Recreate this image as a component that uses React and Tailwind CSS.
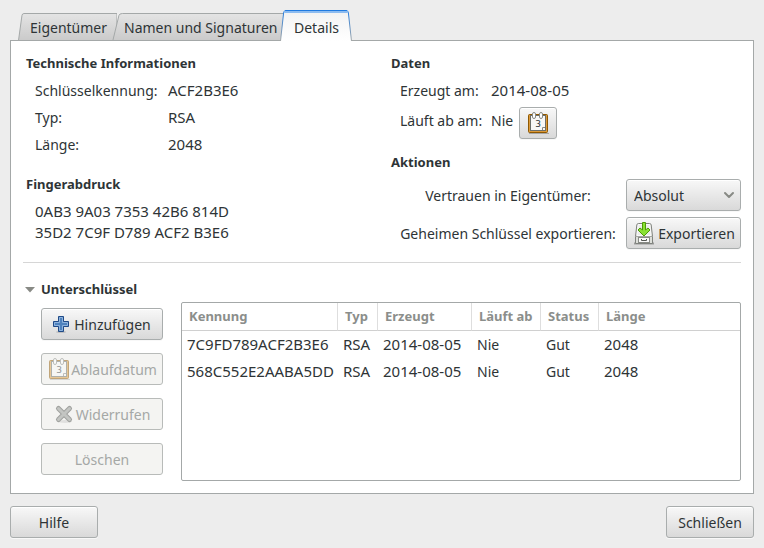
import { useState } from "react";
import { ChevronDown } from "lucide-react";

const BUTTON =
  "flex items-center justify-center rounded-[3px] border border-[#a9adad] bg-linear-to-b from-[#f8f8f8] to-[#d9d9d9] shadow-[0_1px_0_#f8f8f8,inset_0_1px_0_#ffffff] disabled:border-[#b8bbb9] disabled:bg-none disabled:bg-[#f4f4f2] disabled:text-[#a5a8a6] disabled:shadow-none";

const SUBKEYS = [
  ["7C9FD789ACF2B3E6", "RSA", "2014-08-05", "Nie", "Gut", "2048"],
  ["568C552E2AABA5DD", "RSA", "2014-08-05", "Nie", "Gut", "2048"],
];

const COLUMNS = [
  { title: "Kennung", width: "w-[156px]", size: "text-[15px]" },
  { title: "Typ", width: "w-[40px]", size: "text-[15px]" },
  { title: "Erzeugt", width: "w-[94px]", size: "text-[15px]" },
  { title: "Läuft ab", width: "w-[69px]", size: "" },
  { title: "Status", width: "w-[58px]", size: "" },
  { title: "Länge", width: "", size: "text-[15px]" },
];

function CalendarIcon({ className = "" }) {
  return (
    <svg className={`size-6 shrink-0 ${className}`} viewBox="0 0 24 24" aria-hidden="true">
      <path d="M3 22.5h20" stroke="#000" strokeOpacity=".25" />
      <rect x="2.5" y="3.5" width="19" height="18" rx="1" fill="#c17d11" stroke="#8f5902" />
      <rect x="3.5" y="4.5" width="17" height="16" fill="none" stroke="#dc9a3a" />
      <rect x="4.5" y="4.5" width="15" height="15" fill="#f8f8f7" stroke="#6b6e69" />
      <path d="M16.5 19v-2.500H19" fill="none" stroke="#888a85" />
      <rect x="6.5" y="1.5" width="3" height="6" rx="1.5" fill="#fff" stroke="#888a85" />
      <rect x="13.5" y="1.5" width="3" height="6" rx="1.5" fill="#fff" stroke="#888a85" />
      <text x="12" y="16" textAnchor="middle" fontSize="9" fontFamily="DejaVu Sans, sans-serif" fill="#2e3436">
        3
      </text>
    </svg>
  );
}

function ExportIcon() {
  return (
    <svg className="size-6 shrink-0" viewBox="0 0 24 24" aria-hidden="true">
      <path d="M2 22.5h20" stroke="#000" strokeOpacity=".3" strokeWidth="2" />
      <path
        d="M6.500 2.500h11q1.500 0 1.700 1.500l1.300 11.500v7h-17v-7L4.800 4q.2-1.500 1.700-1.500z"
        fill="#dddfda"
        stroke="#7f827d"
        strokeLinejoin="round"
      />
      <path d="M6.200 3.500h11.600l1.200 11H5z" fill="#ebecea" stroke="#fafafa" />
      <path d="M4 15.500h16" stroke="#a3a5a1" />
      <rect x="6.500" y="16.500" width="11" height="5" fill="#fafafa" stroke="#888a85" />
      <path d="M9.500 18v1.500h5V18" fill="none" stroke="#555753" />
      <path
        d="M10.500 1.500h3V9L16 7l2 2-6 6-6-6 2-2 2.500 2z"
        fill="#8ae234"
        stroke="#4e9a06"
        strokeLinejoin="round"
      />
    </svg>
  );
}

function PlusIcon() {
  return (
    <svg className="size-4 shrink-0 overflow-visible" viewBox="0 0 16 16" aria-hidden="true">
      <ellipse cx="8" cy="16" rx="5" ry="1" fill="#000" fillOpacity=".15" />
      <path
        d="M5.500 .5h5v5h5v5h-5v5h-5v-5h-5v-5h5z"
        fill="#4f82bd"
        stroke="#204a87"
        strokeLinejoin="round"
      />
      <path d="M6.500 1.500h3v5h5v3h-5v5h-3v-5h-5v-3h5z" fill="none" stroke="#8fb4de" />
    </svg>
  );
}

function CrossIcon() {
  return (
    <svg className="size-5 shrink-0" viewBox="0 0 20 20" aria-hidden="true">
      <ellipse cx="11" cy="17.500" rx="7" ry="1.500" fill="#000" fillOpacity=".08" />
      <path d="M4.500 4.500l11 11M15.500 4.500l-11 11" stroke="#a0a29f" strokeWidth="5" strokeLinecap="round" />
      <path d="M4.500 4.500l11 11M15.500 4.500l-11 11" stroke="#c3c5c2" strokeWidth="3" strokeLinecap="round" />
    </svg>
  );
}

function Tab({ label, active, last, width, onClick }) {
  return (
    <button
      type="button"
      role="tab"
      aria-selected={active}
      onClick={onClick}
      className={`relative flex h-[31px] shrink-0 items-center pt-1 whitespace-nowrap ${width} ${active ? "z-10 pl-[14px]" : "pl-3"}`}
    >
      <svg
        className={`absolute top-0 left-0 h-full ${last ? "w-full" : "w-[calc(100%+5px)]"}`}
        viewBox="0 0 100 31"
        preserveAspectRatio="none"
        aria-hidden="true"
      >
        <defs>
          <linearGradient id="tab-idle" x1="0" y1="0" x2="0" y2="1">
            <stop offset="0" stopColor="#e4e4e4" />
            <stop offset="1" stopColor="#cacaca" />
          </linearGradient>
          <linearGradient id="tab-active" x1="0" y1="0" x2="0" y2="1">
            <stop offset="0" stopColor="#f2f2f2" />
            <stop offset="1" stopColor="#ffffff" />
          </linearGradient>
          <linearGradient id="tab-edge" x1="0" y1="0" x2="0" y2="1">
            <stop offset="0" stopColor="#1f7ae0" />
            <stop offset="1" stopColor="#a4a8a8" />
          </linearGradient>
        </defs>
        {active ? (
          <>
            <path d="M.7 31L5 3Q5.300 .5 8 .5H92Q94.700 .5 95 3L99.300 31" fill="url(#tab-active)" stroke="url(#tab-edge)" vectorEffect="non-scaling-stroke" />
            <path d="M6 2H94" stroke="#8dbcf0" strokeWidth="2" />
            <path d="M7 .5H93" stroke="#1f7ae0" />
          </>
        ) : (
          <path d="M.5 30.500L4 5.500Q4.300 3.500 6 3.500H100V30.500z" fill="url(#tab-idle)" stroke="#a4a8a8" vectorEffect="non-scaling-stroke" />
        )}
      </svg>
      <span className="relative">{label}</span>
    </button>
  );
}

function Heading({ children, className = "" }) {
  return <h2 className={`text-[13px] leading-[21px] font-bold ${className}`}>{children}</h2>;
}

export default function App() {
  const [tab, setTab] = useState(2);
  return (
    <main className="flex min-h-screen flex-col bg-[#ededed] p-[10px] font-['Noto_Sans',sans-serif] text-[14px] leading-[21px] text-[#2e3436]">
      <div role="tablist" className="-mb-px flex pl-2">
        <Tab label="Eigentümer" width="w-[94px]" active={tab === 0} onClick={() => setTab(0)} />
        <Tab label="Namen und Signaturen" width="w-[168px]" active={tab === 1} onClick={() => setTab(1)} />
        <Tab label="Details" width="w-[72px]" active={tab === 2} last onClick={() => setTab(2)} />
      </div>

      <section className="border border-[#a4a8a8] bg-white px-3 pt-3 pb-3">
        <div className="grid grid-cols-2 gap-[15px] pb-[13px] pl-[3px]">
          <div>
            <Heading>Technische Informationen</Heading>
            <dl className="mt-[6px] grid grid-cols-[133px_1fr] gap-y-[6px] pl-[9px]">
              <dt>Schlüsselkennung:</dt>
              <dd className="text-[15px] leading-[21px]">ACF2B3E6</dd>
              <dt>Typ:</dt>
              <dd className="text-[15px] leading-[21px]">RSA</dd>
              <dt>Länge:</dt>
              <dd className="text-[15px] leading-[21px]">2048</dd>
            </dl>
            <Heading className="mt-[19px]">Fingerabdruck</Heading>
            <p className="mt-[6px] pl-[9px] text-[15px] leading-[21px]">
              0AB3 9A03 7353 42B6 814D
              <br />
              35D2 7C9F D789 ACF2 B3E6
            </p>
          </div>

          <div>
            <Heading>Daten</Heading>
            <dl className="mt-[6px] grid grid-cols-[91px_1fr] gap-y-[6px] pl-[9px]">
              <dt>Erzeugt am:</dt>
              <dd className="text-[15px] leading-[21px]">2014-08-05</dd>
              <dt className="pt-[3px]">Läuft ab am:</dt>
              <dd className="flex gap-[6px]">
                <span className="pt-[3px]">Nie</span>
                <button type="button" aria-label="Ablaufdatum ändern" className={`${BUTTON} h-8 w-[38px]`}>
                  <CalendarIcon />
                </button>
              </dd>
            </dl>
            <Heading className="mt-[13px]">Aktionen</Heading>
            <div className="mt-[6px] grid grid-cols-[1fr_115px] items-center gap-x-[10px] gap-y-[6px] pl-[9px]">
              <label htmlFor="trust" className="text-center">
                Vertrauen in Eigentümer:
              </label>
              <div className="relative">
                <select id="trust" className={`${BUTTON} h-8 w-full appearance-none pl-[7px]`} defaultValue="Absolut">
                  <option>Unbekannt</option>
                  <option>Niemals</option>
                  <option>Marginal</option>
                  <option>Vollständig</option>
                  <option>Absolut</option>
                </select>
                <ChevronDown className="pointer-events-none absolute top-2 right-1 size-4 text-[#888a85]" strokeWidth={3} />
              </div>
              <span className="text-center whitespace-nowrap">Geheimen Schlüssel exportieren:</span>
              <button type="button" className={`${BUTTON} h-8 gap-[2px]`}>
                <ExportIcon />
                Exportieren
              </button>
            </div>
          </div>
        </div>

        <hr className="border-[#d6d6d6]" />

        <details open className="group mt-4">
          <summary className="flex cursor-default list-none items-center gap-[6px] pl-[2px] text-[13px] leading-[21px] font-bold">
            <svg className="h-[6px] w-[10px] -rotate-90 group-open:rotate-0" viewBox="0 0 10 6" aria-hidden="true">
              <path d="M0 0h10L5 5.500z" fill="#888a85" />
            </svg>
            Unterschlüssel
          </summary>
          <div className="flex gap-[18px] pt-[2px] pl-[18px]">
            <div className="flex w-[122px] shrink-0 flex-col gap-[13px] py-[6px]">
              <button type="button" className={`${BUTTON} h-8 gap-[5px]`}>
                <PlusIcon />
                Hinzufügen
              </button>
              <button type="button" disabled className={`${BUTTON} h-8`}>
                <CalendarIcon className="opacity-50" />
                Ablaufdatum
              </button>
              <button type="button" disabled className={`${BUTTON} h-8 gap-[2px]`}>
                <CrossIcon />
                Widerrufen
              </button>
              <button type="button" disabled className={`${BUTTON} h-8`}>
                Löschen
              </button>
            </div>
            <div className="min-w-0 flex-1 rounded-xs border border-[#a4a8a8]">
              <table className="w-full table-fixed border-separate border-spacing-0 text-left">
                <thead>
                  <tr className="h-7 text-[13px] leading-[21px] text-[#8b8e8b]">
                    {COLUMNS.map(({ title, width }) => (
                      <th
                        key={title}
                        scope="col"
                        className={`border-r border-b border-r-[#dedede] border-b-[#d0d0d0] p-0 pl-[7px] font-bold whitespace-nowrap last:border-r-0 ${width}`}
                      >
                        {title}
                      </th>
                    ))}
                  </tr>
                </thead>
                <tbody>
                  {SUBKEYS.map((row) => (
                    <tr key={row[0]} className="h-[27px] leading-[21px]">
                      {row.map((cell, i) => (
                        <td key={i} className={`p-0 pl-[5px] whitespace-nowrap ${COLUMNS[i].size}`}>
                          {cell}
                        </td>
                      ))}
                    </tr>
                  ))}
                </tbody>
              </table>
            </div>
          </div>
        </details>
      </section>

      <footer className="flex justify-between pt-3">
        <button type="button" className={`${BUTTON} h-8 w-[88px]`}>
          Hilfe
        </button>
        <button type="button" className={`${BUTTON} h-8 w-[88px]`}>
          Schließen
        </button>
      </footer>
    </main>
  );
}
